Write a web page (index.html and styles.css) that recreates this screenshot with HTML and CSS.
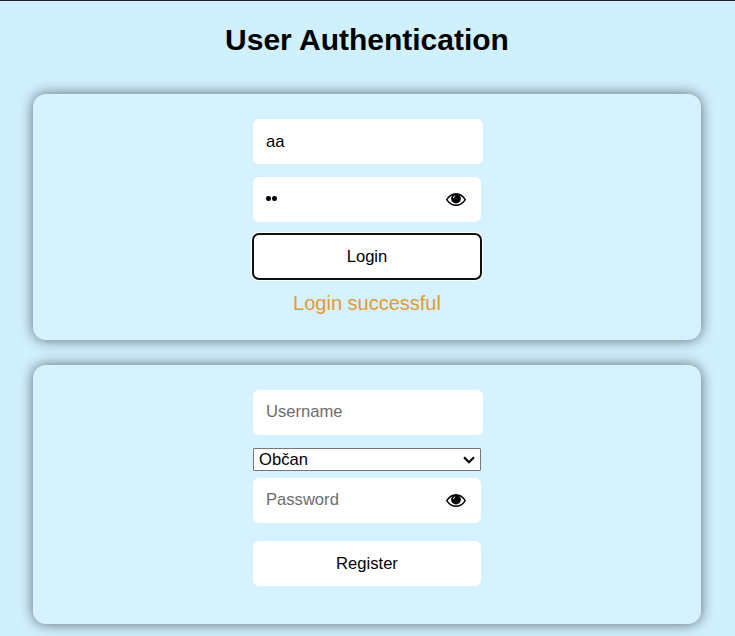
FILE: index.html
```html
<!DOCTYPE html>
<html lang="en">
<head>
<meta charset="utf-8">
<title>User Authentication</title>
<link rel="stylesheet" href="styles.css">
</head>
<body>
<h1>User Authentication</h1>
<form class="card login">
  <input class="field name filled" type="text" value="aa">
  <div class="field password">
    <span class="dots"><i></i><i></i></span>
    <svg class="eye" viewBox="0 0 20 13"><path d="M.7 6.600Q4.500.7 10 .7T19.300 6.600Q15.500 12.300 10 12.300T.7 6.600Z" fill="#fff" stroke="#000" stroke-width="1.400"/><circle cx="10" cy="5.600" r="4.900"/><path d="M7.400 5Q7.500 3.300 9.100 2.800" fill="none" stroke="#fff" stroke-width="1"/></svg>
  </div>
  <button class="field focused" type="button">Login</button>
  <p class="message">Login successful</p>
</form>
<form class="card register">
  <input class="field name" type="text" placeholder="Username">
  <div class="select"><span>Občan</span><svg class="chevron" viewBox="0 0 12 8"><path d="M1 1.200 6 6.200 11 1.200" fill="none" stroke="#000" stroke-width="2.200"/></svg></div>
  <div class="field password">
    <span class="placeholder">Password</span>
    <svg class="eye" viewBox="0 0 20 13"><path d="M.7 6.600Q4.500.7 10 .7T19.300 6.600Q15.500 12.300 10 12.300T.7 6.600Z" fill="#fff" stroke="#000" stroke-width="1.400"/><circle cx="10" cy="5.600" r="4.900"/><path d="M7.400 5Q7.500 3.300 9.100 2.800" fill="none" stroke="#fff" stroke-width="1"/></svg>
  </div>
  <button class="field submit" type="button">Register</button>
</form>
</body>
</html>
```
FILE: styles.css
```css
* { box-sizing: border-box; }
html { background: #d0f0fe; }
body {
  margin: 0;
  height: 636px;
  overflow: hidden;
  border-top: 1px solid #241f28;
  background: #d0f0fe;
  color: #000;
  font: 16.600px/20px Arial, "Liberation Sans", sans-serif;
}
h1 {
  margin: 20px 0 35px;
  padding-right: 1px;
  text-align: center;
  font-size: 30px;
  line-height: 38px;
}
.card {
  width: 668px;
  margin: 0 0 25px 33px;
  padding: 25px 220px 0;
  border-radius: 13px;
  background: #d6f1ff;
  box-shadow: 0 0 14px rgba(0, 0, 0, .56);
}
.login { height: 246px; }
.register { height: 259px; }
.field {
  display: block;
  width: 228px;
  height: 45px;
  margin: 0;
  padding: 0 13px;
  border: 0;
  border-radius: 6px;
  background: #fff;
  color: #000;
  font: inherit;
}
.name { width: 230px; padding-bottom: 1px; margin-bottom: 13px; }
.filled { padding: 1px 13px 0; }
.name::placeholder, .placeholder { color: #6c6c6c; }
.password {
  display: flex;
  align-items: center;
  justify-content: space-between;
  padding-right: 15px;
}
.placeholder { margin-top: -2px; }
.dots { display: flex; gap: 1.200px; margin-top: -2px; }
.dots i { width: 4.800px; height: 4.500px; border-radius: 50%; background: #000; }
.eye { width: 20px; height: 13px; }
.focused { margin-top: 12px; outline: 2px solid #101010; outline-offset: -1px; box-shadow: 0 0 0 2px #fff; }
.message {
  margin: 12px 0 0;
  text-align: center;
  font-size: 20px;
  line-height: 24px;
  color: #e39a32;
}
.select {
  display: flex;
  align-items: center;
  justify-content: space-between;
  width: 228px;
  height: 23px;
  margin-bottom: 7px;
  padding: 0 5px;
  border: 1px solid #767676;
  border-radius: 1px;
  background: #fff;
}
.chevron { width: 12px; height: 8px; }
.submit { margin-top: 18px; }
```
